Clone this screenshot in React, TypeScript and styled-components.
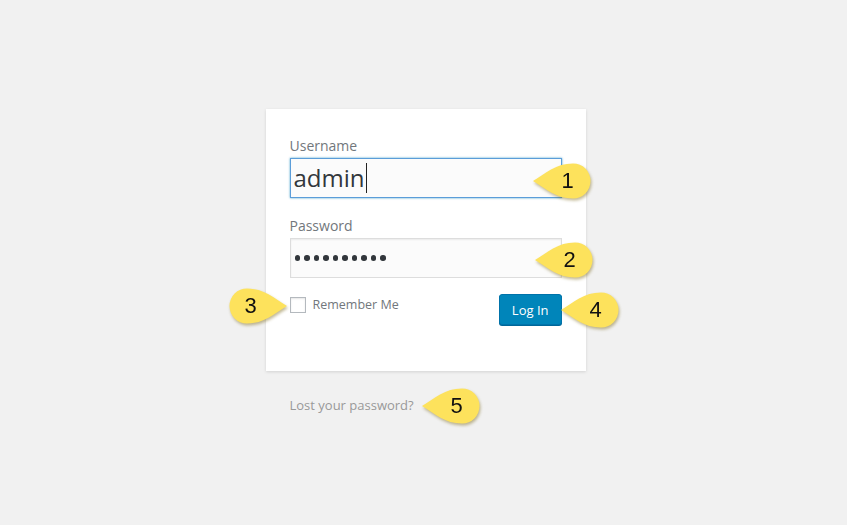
import * as React from 'react'
import styled, { createGlobalStyle } from 'styled-components'

const GlobalStyle = createGlobalStyle`
  html, body {
    margin: 0;
    padding: 0;
    background: #f1f1f1;
  }
  body {
    font-family: "Open Sans", "Liberation Sans", sans-serif;
    color: #444;
  }
`

const Page = styled.div`
  min-height: 100vh;
  display: flex;
  justify-content: center;
  padding: 109px 0 0 4px;
  box-sizing: border-box;
`

const Column = styled.div`
  width: 320px;
`

const Card = styled.form`
  background: #fff;
  box-shadow: 0 1px 3px rgba(0, 0, 0, 0.13);
  padding: 26px 24px 46px;
  margin: 0;
`

const Label = styled.div`
  font-size: 14px;
  line-height: 21px;
  color: #72777c;
`

const FieldWrap = styled.div`
  position: relative;
  margin: 2px 0 17px;
`

const Field = styled.div<{ $focused?: boolean }>`
  box-sizing: border-box;
  height: 40px;
  display: flex;
  align-items: center;
  padding: 0 3px;
  background: #fbfbfb;
  border: 1px solid ${p => (p.$focused ? '#5b9dd9' : '#ddd')};
  box-shadow: ${p =>
    p.$focused
      ? '0 0 2px rgba(30, 140, 190, 0.8)'
      : 'inset 0 1px 2px rgba(0, 0, 0, 0.07)'};
  font-size: 24px;
  color: #32373c;
`

const Value = styled.span`
  line-height: 1;
`

const Caret = styled.span`
  display: inline-block;
  width: 1px;
  height: 30px;
  margin-left: 1px;
  background: #222;
`

const Dots = styled.div`
  display: flex;
  gap: 4px;
  padding-left: 1px;
`

const Dot = styled.span`
  width: 5.5px;
  height: 5.5px;
  border-radius: 50%;
  background: #32373c;
`

const ActionRow = styled.div`
  position: relative;
  display: flex;
  justify-content: space-between;
  align-items: flex-start;
  margin-top: -1px;
`

const Remember = styled.label`
  display: flex;
  align-items: center;
  gap: 7px;
  margin-top: 3px;
  font-size: 12.5px;
  line-height: 16px;
  color: #72777c;
`

const Checkbox = styled.span`
  box-sizing: border-box;
  width: 16px;
  height: 16px;
  border: 1px solid #b4b9be;
  background: #fff;
  box-shadow: inset 0 1px 2px rgba(0, 0, 0, 0.1);
`

const Button = styled.button`
  height: 31px;
  padding: 0 12px;
  border: 1px solid #0073aa;
  border-radius: 3px;
  background: #0085ba;
  box-shadow: 0 1px 0 #006799;
  color: #fff;
  font-family: "Open Sans", "Liberation Sans", sans-serif;
  font-size: 13px;
  line-height: 28px;
`

const Nav = styled.div`
  position: relative;
  margin-top: 22px;
  padding: 0 24px;
`

const NavLink = styled.span`
  position: relative;
  display: inline-block;
  font-size: 13px;
  line-height: 20px;
  color: #999;
`

const CalloutBox = styled.div<{ $left: number; $top: number }>`
  position: absolute;
  left: ${p => p.$left}px;
  top: ${p => p.$top}px;
  width: 62px;
  height: 44px;
  pointer-events: none;
  filter: drop-shadow(1px 2px 1.5px rgba(120, 100, 20, 0.45));
`

const CalloutSvg = styled.svg<{ $flip?: boolean }>`
  display: block;
  transform: ${p => (p.$flip ? 'scaleX(-1)' : 'none')};
`

const CalloutNumber = styled.span<{ $flip?: boolean }>`
  position: absolute;
  top: 0;
  height: 40px;
  width: 36px;
  left: ${p => (p.$flip ? '7px' : '18px')};
  display: flex;
  align-items: center;
  justify-content: center;
  font-family: "Liberation Sans", Arial, sans-serif;
  font-size: 22px;
  color: #111;
`

const Callout = ({
  n,
  left,
  top,
  flip,
}: {
  n: number
  left: number
  top: number
  flip?: boolean
}) => (
  <CalloutBox $left={left} $top={top}>
    <CalloutSvg $flip={flip} width="62" height="44" viewBox="0 0 62 44">
      <path
        d="M1,20 C14,12 24,2.5 41,2.5 A17.5,17.5 0 1 1 41,37.5 C24,37.5 14,28 1,20 Z"
        fill="#fde25c"
      />
    </CalloutSvg>
    <CalloutNumber $flip={flip}>{n}</CalloutNumber>
  </CalloutBox>
)

export default function App() {
  return (
    <>
      <GlobalStyle />
      <Page>
        <Column>
          <Card>
            <Label>Username</Label>
            <FieldWrap>
              <Field $focused>
                <Value>admin</Value>
                <Caret />
              </Field>
              <Callout n={1} left={242} top={3} />
            </FieldWrap>

            <Label>Password</Label>
            <FieldWrap>
              <Field>
                <Dots>
                  {Array.from({ length: 10 }).map((_, i) => (
                    <Dot key={i} />
                  ))}
                </Dots>
              </Field>
              <Callout n={2} left={244} top={2} />
            </FieldWrap>

            <ActionRow>
              <Remember>
                <Checkbox />
                Remember Me
              </Remember>
              <Button type="button">Log In</Button>
              <Callout n={3} left={-64} top={-8} flip />
              <Callout n={4} left={270} top={-4} />
            </ActionRow>
          </Card>

          <Nav>
            <NavLink>
              Lost your password?
              <Callout n={5} left={131} top={-9} />
            </NavLink>
          </Nav>
        </Column>
      </Page>
    </>
  )
}
